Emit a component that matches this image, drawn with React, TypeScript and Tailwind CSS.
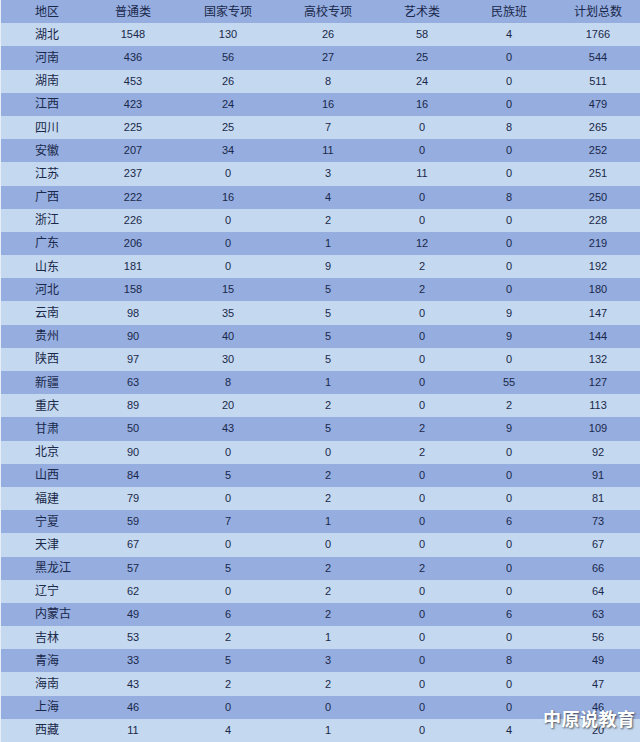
import React from "react";

const rows: (string | number)[][] = [
  ["湖北", 1548, 130, 26, 58, 4, 1766],
  ["河南", 436, 56, 27, 25, 0, 544],
  ["湖南", 453, 26, 8, 24, 0, 511],
  ["江西", 423, 24, 16, 16, 0, 479],
  ["四川", 225, 25, 7, 0, 8, 265],
  ["安徽", 207, 34, 11, 0, 0, 252],
  ["江苏", 237, 0, 3, 11, 0, 251],
  ["广西", 222, 16, 4, 0, 8, 250],
  ["浙江", 226, 0, 2, 0, 0, 228],
  ["广东", 206, 0, 1, 12, 0, 219],
  ["山东", 181, 0, 9, 2, 0, 192],
  ["河北", 158, 15, 5, 2, 0, 180],
  ["云南", 98, 35, 5, 0, 9, 147],
  ["贵州", 90, 40, 5, 0, 9, 144],
  ["陕西", 97, 30, 5, 0, 0, 132],
  ["新疆", 63, 8, 1, 0, 55, 127],
  ["重庆", 89, 20, 2, 0, 2, 113],
  ["甘肃", 50, 43, 5, 2, 9, 109],
  ["北京", 90, 0, 0, 2, 0, 92],
  ["山西", 84, 5, 2, 0, 0, 91],
  ["福建", 79, 0, 2, 0, 0, 81],
  ["宁夏", 59, 7, 1, 0, 6, 73],
  ["天津", 67, 0, 0, 0, 0, 67],
  ["黑龙江", 57, 5, 2, 2, 0, 66],
  ["辽宁", 62, 0, 2, 0, 0, 64],
  ["内蒙古", 49, 6, 2, 0, 6, 63],
  ["吉林", 53, 2, 1, 0, 0, 56],
  ["青海", 33, 5, 3, 0, 8, 49],
  ["海南", 43, 2, 2, 0, 0, 47],
  ["上海", 46, 0, 0, 0, 0, 46],
  ["西藏", 11, 4, 1, 0, 4, 20],
];

const header = ["地区", "普通类", "国家专项", "高校专项", "艺术类", "民族班", "计划总数"];

function Row({ cells, dark }: { cells: (string | number)[]; dark: boolean }) {
  return (
    <div
      className={`flex-1 grid grid-cols-[84px_96px_94px_106px_82px_92px_86px] items-center ${
        dark ? "bg-[#95addf]" : "bg-[#c4d8ef]"
      }`}
    >
      {cells.map((c, i) => (
        <div
          key={i}
          className={`${i === 0 ? "pl-[34px] text-left" : "text-center"} ${
            typeof c === "number" ? "text-[11px]" : "text-[12px]"
          }`}
        >
          {c}
        </div>
      ))}
    </div>
  );
}

export default function App() {
  return (
    <div
      className="relative w-[640px] h-[742px] flex flex-col leading-none text-[#1a284a] border-l border-l-[#e4edf8]"
      style={{ fontFamily: '"Liberation Sans", "Noto Sans CJK SC", sans-serif' }}
    >
      <Row cells={header} dark />
      {rows.map((r, i) => (
        <Row key={i} cells={r} dark={i % 2 === 1} />
      ))}
      <div
        className="absolute left-[542px] top-[709px] text-[18px] font-bold text-white tracking-[0.5px] [text-shadow:1px_1px_2px_rgba(0,0,0,0.6)]"
        style={{ fontFamily: '"Noto Sans CJK SC", sans-serif' }}
      >
        中原说教育
      </div>
    </div>
  );
}
